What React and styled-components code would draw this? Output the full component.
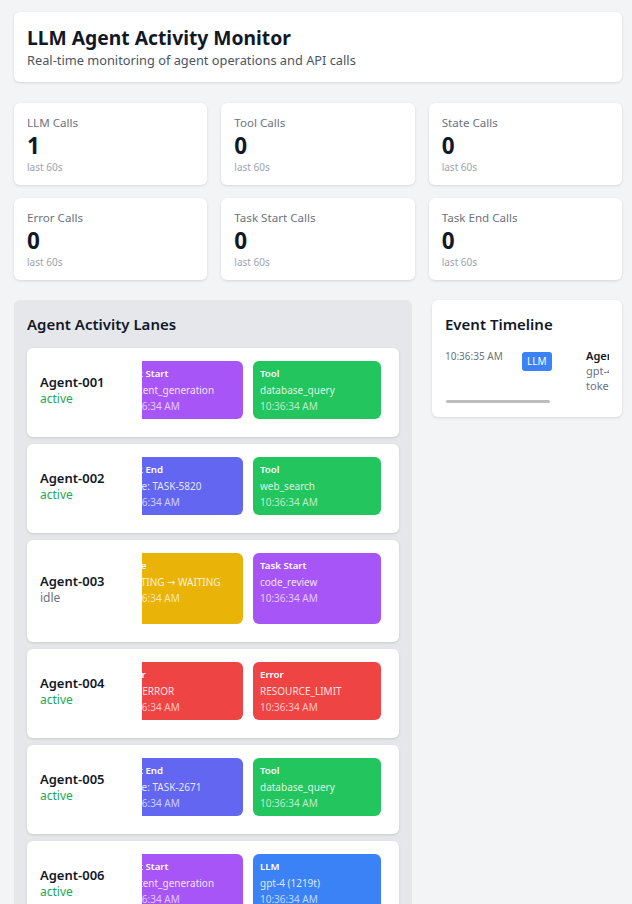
import React from "react";
import styled, { createGlobalStyle } from "styled-components";

const GlobalStyle = createGlobalStyle`
  * { box-sizing: border-box; }
  body {
    margin: 0;
    background: #f3f4f6;
    font-family: "Noto Sans", "DejaVu Sans", sans-serif;
    color: #111827;
  }
`;

const EVENT_COLORS = {
  "Task Start": "#a855f7",
  "Task End": "#6366f1",
  Tool: "#22c55e",
  State: "#eab308",
  Error: "#ef4444",
  LLM: "#3b82f6",
};

const stats = [
  { label: "LLM Calls", value: 1 },
  { label: "Tool Calls", value: 0 },
  { label: "State Calls", value: 0 },
  { label: "Error Calls", value: 0 },
  { label: "Task Start Calls", value: 0 },
  { label: "Task End Calls", value: 0 },
];

const TIME = "10:36:34 AM";

const lanes = [
  {
    name: "Agent-001",
    status: "active",
    events: [
      { type: "Task Start", detail: "content_generation" },
      { type: "Tool", detail: "database_query" },
    ],
  },
  {
    name: "Agent-002",
    status: "active",
    events: [
      { type: "Task End", detail: "Done: TASK-5820" },
      { type: "Tool", detail: "web_search" },
    ],
  },
  {
    name: "Agent-003",
    status: "idle",
    minHeight: 71,
    events: [
      { type: "State", detail: "WAITING → WAITING" },
      { type: "Task Start", detail: "code_review" },
    ],
  },
  {
    name: "Agent-004",
    status: "active",
    events: [
      { type: "Error", detail: "API_ERROR" },
      { type: "Error", detail: "RESOURCE_LIMIT" },
    ],
  },
  {
    name: "Agent-005",
    status: "active",
    events: [
      { type: "Task End", detail: "Done: TASK-2671" },
      { type: "Tool", detail: "database_query" },
    ],
  },
  {
    name: "Agent-006",
    status: "active",
    events: [
      { type: "Task Start", detail: "content_generation" },
      { type: "LLM", detail: "gpt-4 (1219t)" },
    ],
  },
];

const App = () => {
  return (
    <Page>
      <GlobalStyle />
      <Header>
        <h1>LLM Agent Activity Monitor</h1>
        <p>Real-time monitoring of agent operations and API calls</p>
      </Header>

      <StatsGrid>
        {stats.map((s) => (
          <StatCard key={s.label}>
            <div className="label">{s.label}</div>
            <div className="value">{s.value}</div>
            <div className="window">last 60s</div>
          </StatCard>
        ))}
      </StatsGrid>

      <Main>
        <LanesPanel>
          <PanelTitle>Agent Activity Lanes</PanelTitle>
          {lanes.map((lane) => (
            <Lane key={lane.name}>
              <AgentInfo>
                <div className="name">{lane.name}</div>
                <Status $status={lane.status}>{lane.status}</Status>
              </AgentInfo>
              <EventsRow>
                {lane.events.map((ev, i) => (
                  <EventCard key={i} $color={EVENT_COLORS[ev.type]} $minHeight={lane.minHeight}>
                    <div className="type">{ev.type}</div>
                    <div className="detail">{ev.detail}</div>
                    <div className="time">{TIME}</div>
                  </EventCard>
                ))}
              </EventsRow>
            </Lane>
          ))}
        </LanesPanel>

        <TimelineCard>
          <PanelTitle>Event Timeline</PanelTitle>
          <TimelineScroll>
            <TimelineItem>
              <div className="time">10:36:35 AM</div>
              <div>
                <Badge $color={EVENT_COLORS.LLM}>LLM</Badge>
              </div>
              <div className="info">
                <div className="agent">Agent-006</div>
                <div className="meta">gpt-4</div>
                <div className="meta">tokens: 1219</div>
              </div>
            </TimelineItem>
          </TimelineScroll>
          <ScrollThumb />
        </TimelineCard>
      </Main>
    </Page>
  );
};

const Page = styled.div`
  padding: 12px 10px 12px 14px;
`;

const Header = styled.header`
  background: #fff;
  border-radius: 6px;
  box-shadow: 0 1px 3px rgba(0, 0, 0, 0.12);
  padding: 13px;

  h1 {
    margin: 0;
    font-size: 19.3px;
    line-height: 26px;
    font-weight: 700;
    color: #111827;
  }

  p {
    margin: 0;
    font-size: 12.8px;
    line-height: 18px;
    color: #4b5563;
  }
`;

const StatsGrid = styled.div`
  display: grid;
  grid-template-columns: repeat(3, 1fr);
  gap: 13px 14px;
  margin-top: 21px;
`;

const StatCard = styled.div`
  background: #fff;
  border-radius: 6px;
  box-shadow: 0 1px 3px rgba(0, 0, 0, 0.12);
  padding: 12px 13px 11px;
  height: 82px;

  .label {
    font-size: 11.6px;
    line-height: 16px;
    color: #6b7280;
  }

  .value {
    font-size: 22.5px;
    line-height: 29px;
    font-weight: 700;
    color: #111827;
  }

  .window {
    font-size: 10px;
    line-height: 14px;
    color: #9ca3af;
  }
`;

const Main = styled.div`
  display: grid;
  grid-template-columns: 1fr 190px;
  gap: 20px;
  align-items: start;
  margin-top: 20px;
`;

const LanesPanel = styled.section`
  background: #e5e7eb;
  border-radius: 6px;
  padding: 13px;
  min-width: 0;
`;

const PanelTitle = styled.h2`
  margin: 0 0 13px;
  font-size: 15px;
  line-height: 22px;
  font-weight: 600;
  color: #111827;
`;

const Lane = styled.div`
  display: flex;
  align-items: center;
  background: #fff;
  border-radius: 6px;
  box-shadow: 0 1px 3px rgba(0, 0, 0, 0.12);
  padding: 13px;
  margin-bottom: 7px;
`;

const AgentInfo = styled.div`
  width: 102px;
  flex-shrink: 0;
  margin-top: -4px;

  .name {
    font-size: 13px;
    line-height: 17px;
    font-weight: 600;
    color: #111827;
  }
`;

const Status = styled.div`
  font-size: 12px;
  line-height: 16px;
  color: ${(p) => (p.$status === "active" ? "#22a755" : "#6b7280")};
`;

const EventsRow = styled.div`
  flex: 1;
  min-width: 0;
  display: flex;
  justify-content: flex-end;
  gap: 10px;
  overflow: hidden;
  padding: 0 5px 5px 0;
`;

const EventCard = styled.div`
  flex-shrink: 0;
  width: 128px;
  min-height: ${(p) => (p.$minHeight ? `${p.$minHeight}px` : "58px")};
  background: ${(p) => p.$color};
  border-radius: 6px;
  padding: 5px 7px;
  font-size: 10px;
  line-height: 16px;
  color: #fff;
  white-space: nowrap;

  .type {
    font-weight: 600;
    font-size: 9.7px;
  }

  .detail {
    color: rgba(255, 255, 255, 0.85);
  }

  .time {
    color: rgba(255, 255, 255, 0.7);
  }
`;

const TimelineCard = styled.section`
  background: #fff;
  border-radius: 6px;
  box-shadow: 0 1px 3px rgba(0, 0, 0, 0.12);
  padding: 13px;
  min-width: 0;
`;

const TimelineScroll = styled.div`
  overflow: hidden;
`;

const ScrollThumb = styled.div`
  width: 104px;
  height: 3px;
  margin: 7px 0 1px 1px;
  background: #bdbdbd;
  border-radius: 2px;
`;

const TimelineItem = styled.div`
  display: grid;
  grid-template-columns: 70px 57px 118px;
  column-gap: 7px;
  align-items: start;
  width: max-content;

  .time {
    font-size: 10px;
    line-height: 14px;
    color: #6b7280;
    margin-top: 1px;
  }

  .info {
    font-size: 11px;
    line-height: 15px;
  }

  .agent {
    font-weight: 600;
    color: #111827;
  }

  .meta {
    color: #6b7280;
  }
`;

const Badge = styled.span`
  display: inline-block;
  background: ${(p) => p.$color};
  color: #fff;
  font-size: 10px;
  line-height: 15px;
  padding: 2px 5px;
  border-radius: 3px;
`;

export default App;
